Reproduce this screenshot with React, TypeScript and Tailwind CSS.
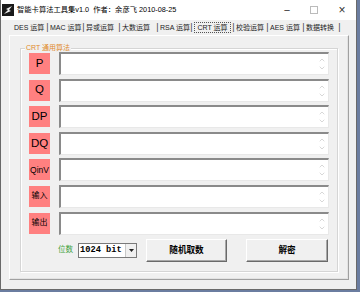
import { ChevronUp, ChevronDown } from "lucide-react";

const cn = '"Liberation Sans", "Noto Sans CJK SC", sans-serif';

const tabs: { name: string; w: string }[] = [
  { name: "DES 运算", w: "w-[31px]" },
  { name: "MAC 运算", w: "w-[31px]" },
  { name: "异或运算", w: "w-[31px]" },
  { name: "大数运算", w: "w-[33px]" },
  { name: "RSA 运算", w: "w-[29px]" },
  { name: "CRT 运算", w: "w-[37px]" },
  { name: "校验运算", w: "w-[29px]" },
  { name: "AES 运算", w: "w-[31px]" },
  { name: "数据转换", w: "w-[31px]" },
];

const rows: { label: string; size: string }[] = [
  { label: "P", size: "text-[11.5px]" },
  { label: "Q", size: "text-[11.5px]" },
  { label: "DP", size: "text-[11.5px]" },
  { label: "DQ", size: "text-[11.5px]" },
  { label: "QinV", size: "text-[8.5px]" },
  { label: "输入", size: "text-[8px]" },
  { label: "输出", size: "text-[8px]" },
];

function AppIcon() {
  return (
    <svg width="12" height="12" viewBox="0 0 12 12">
      <rect x="0" y="0" width="12" height="12" fill="#1a1a1a" />
      <path d="M2 10 L6 6 L4 5 L10 2 L7 6 L9 7 Z" fill="#f0f0f0" />
    </svg>
  );
}

function Row({ label, size }: { label: string; size: string }) {
  return (
    <div className="flex items-center h-[23px]">
      <div className={`w-[21px] h-[21px] ml-[8px] bg-[#ff8080] flex items-center justify-center text-black whitespace-nowrap leading-none ${size}`}>
        {label}
      </div>
      <div className="ml-[9px] w-[270px] h-[23px] bg-white border-t-2 border-l-2 border-t-[#8a8a8a] border-l-[#8a8a8a] border-r border-b border-r-[#e8e8e8] border-b-[#e8e8e8] flex justify-end">
        <div className="w-[10px] flex flex-col items-center justify-between py-[2px] mr-[1px]">
          <ChevronUp size={8} color="#c4c4c4" strokeWidth={2} />
          <ChevronDown size={8} color="#c4c4c4" strokeWidth={2} />
        </div>
      </div>
    </div>
  );
}

export default function App() {
  return (
    <div className="w-[360px] h-[292px] bg-[#6b7da0] overflow-hidden" style={{ fontFamily: cn }}>
      <div className="w-[357px] h-[290px] bg-[#f0f0f0] border-l border-b border-r border-[#6a6a6a] flex flex-col">
        {/* title bar */}
        <div className="h-[20px] bg-white flex items-center shrink-0">
          <div className="ml-[1px]"><AppIcon /></div>
          <span className="ml-[3px] text-[7.3px] text-black whitespace-nowrap">智能卡算法工具集v1.0&nbsp;&nbsp;作者：余彦飞 2010-08-25</span>
          <div className="flex-1" />
          <span className="w-[26px] text-center text-[11px] text-[#333] leading-none">−</span>
          <div className="w-[28px] flex justify-center"><div className="w-[8px] h-[8px] border border-[#bbb]" /></div>
          <span className="w-[28px] text-center text-[12px] text-[#333] leading-none">×</span>
        </div>

        {/* tabs */}
        <div className="flex items-center h-[15px] ml-[13px] text-[#222] text-[7px] whitespace-nowrap leading-none">
          {tabs.map((t) => (
            <div key={t.name} className="flex items-center">
              {t.name === "CRT 运算" ? (
                <div className={`${t.w} h-[11px] border border-dotted border-[#555] flex items-center justify-center`}>
                  <span>{t.name}</span>
                </div>
              ) : (
                <div className={t.w}>
                  <span>{t.name}</span>
                </div>
              )}
              <span className="w-[5px] text-center text-[9px] text-[#444]">|</span>
            </div>
          ))}
        </div>

        {/* tab panel */}
        <div className="ml-[8px] w-[340px] h-[245px] border border-t-white border-l-white border-r-[#a0a0a0] border-b-[#a0a0a0] shadow-[inset_-1px_-1px_0_#e3e3e3] pt-[9px] pl-[10px]">
          {/* group box */}
          <div className="relative w-[318px] h-[224px] border border-[#d5d5d5] shadow-[inset_1px_1px_0_white,1px_1px_0_white] mt-[3px]">
            <span className="absolute -top-[5px] left-[4px] bg-[#f0f0f0] px-[1px] text-[7px] text-[#e08a2c] leading-none whitespace-nowrap">CRT 通用算法</span>
            <div className="flex flex-col gap-[3.6px] pt-[3px]">
              {rows.map((r) => (
                <Row key={r.label} label={r.label} size={r.size} />
              ))}
            </div>
            <div className="flex items-center mt-[4px]">
              <span className="ml-[37px] w-[16px] text-[7.5px] text-[#3aa13a] whitespace-nowrap">位数</span>
              <div className="ml-[4px] w-[59px] h-[15px] bg-white border border-[#7a7a7a] flex items-center">
                <span className="flex-1 pl-[1px] text-[8.7px] font-bold text-black leading-none whitespace-nowrap" style={{ fontFamily: '"Liberation Mono", monospace' }}>1024 bit</span>
                <div className="w-[11px] h-[13px] bg-[#f0f0f0] border-l border-[#c8c8c8] flex items-center justify-center">
                  <svg width="5" height="3" viewBox="0 0 5 3"><path d="M0 0 H5 L2.5 3 Z" fill="#222" /></svg>
                </div>
              </div>
              <button className="ml-[9px] w-[81px] h-[23px] bg-[#f0f0f0] border border-t-white border-l-white border-r-[#6a6a6a] border-b-[#6a6a6a] shadow-[inset_-1px_-1px_0_#a8a8a8] text-[8.6px] font-bold text-black">
                随机取数
              </button>
              <button className="ml-[19px] w-[82px] h-[23px] bg-[#f0f0f0] border border-t-white border-l-white border-r-[#6a6a6a] border-b-[#6a6a6a] shadow-[inset_-1px_-1px_0_#a8a8a8] text-[8.6px] font-bold text-black">
                解密
              </button>
            </div>
          </div>
        </div>
      </div>
    </div>
  );
}
